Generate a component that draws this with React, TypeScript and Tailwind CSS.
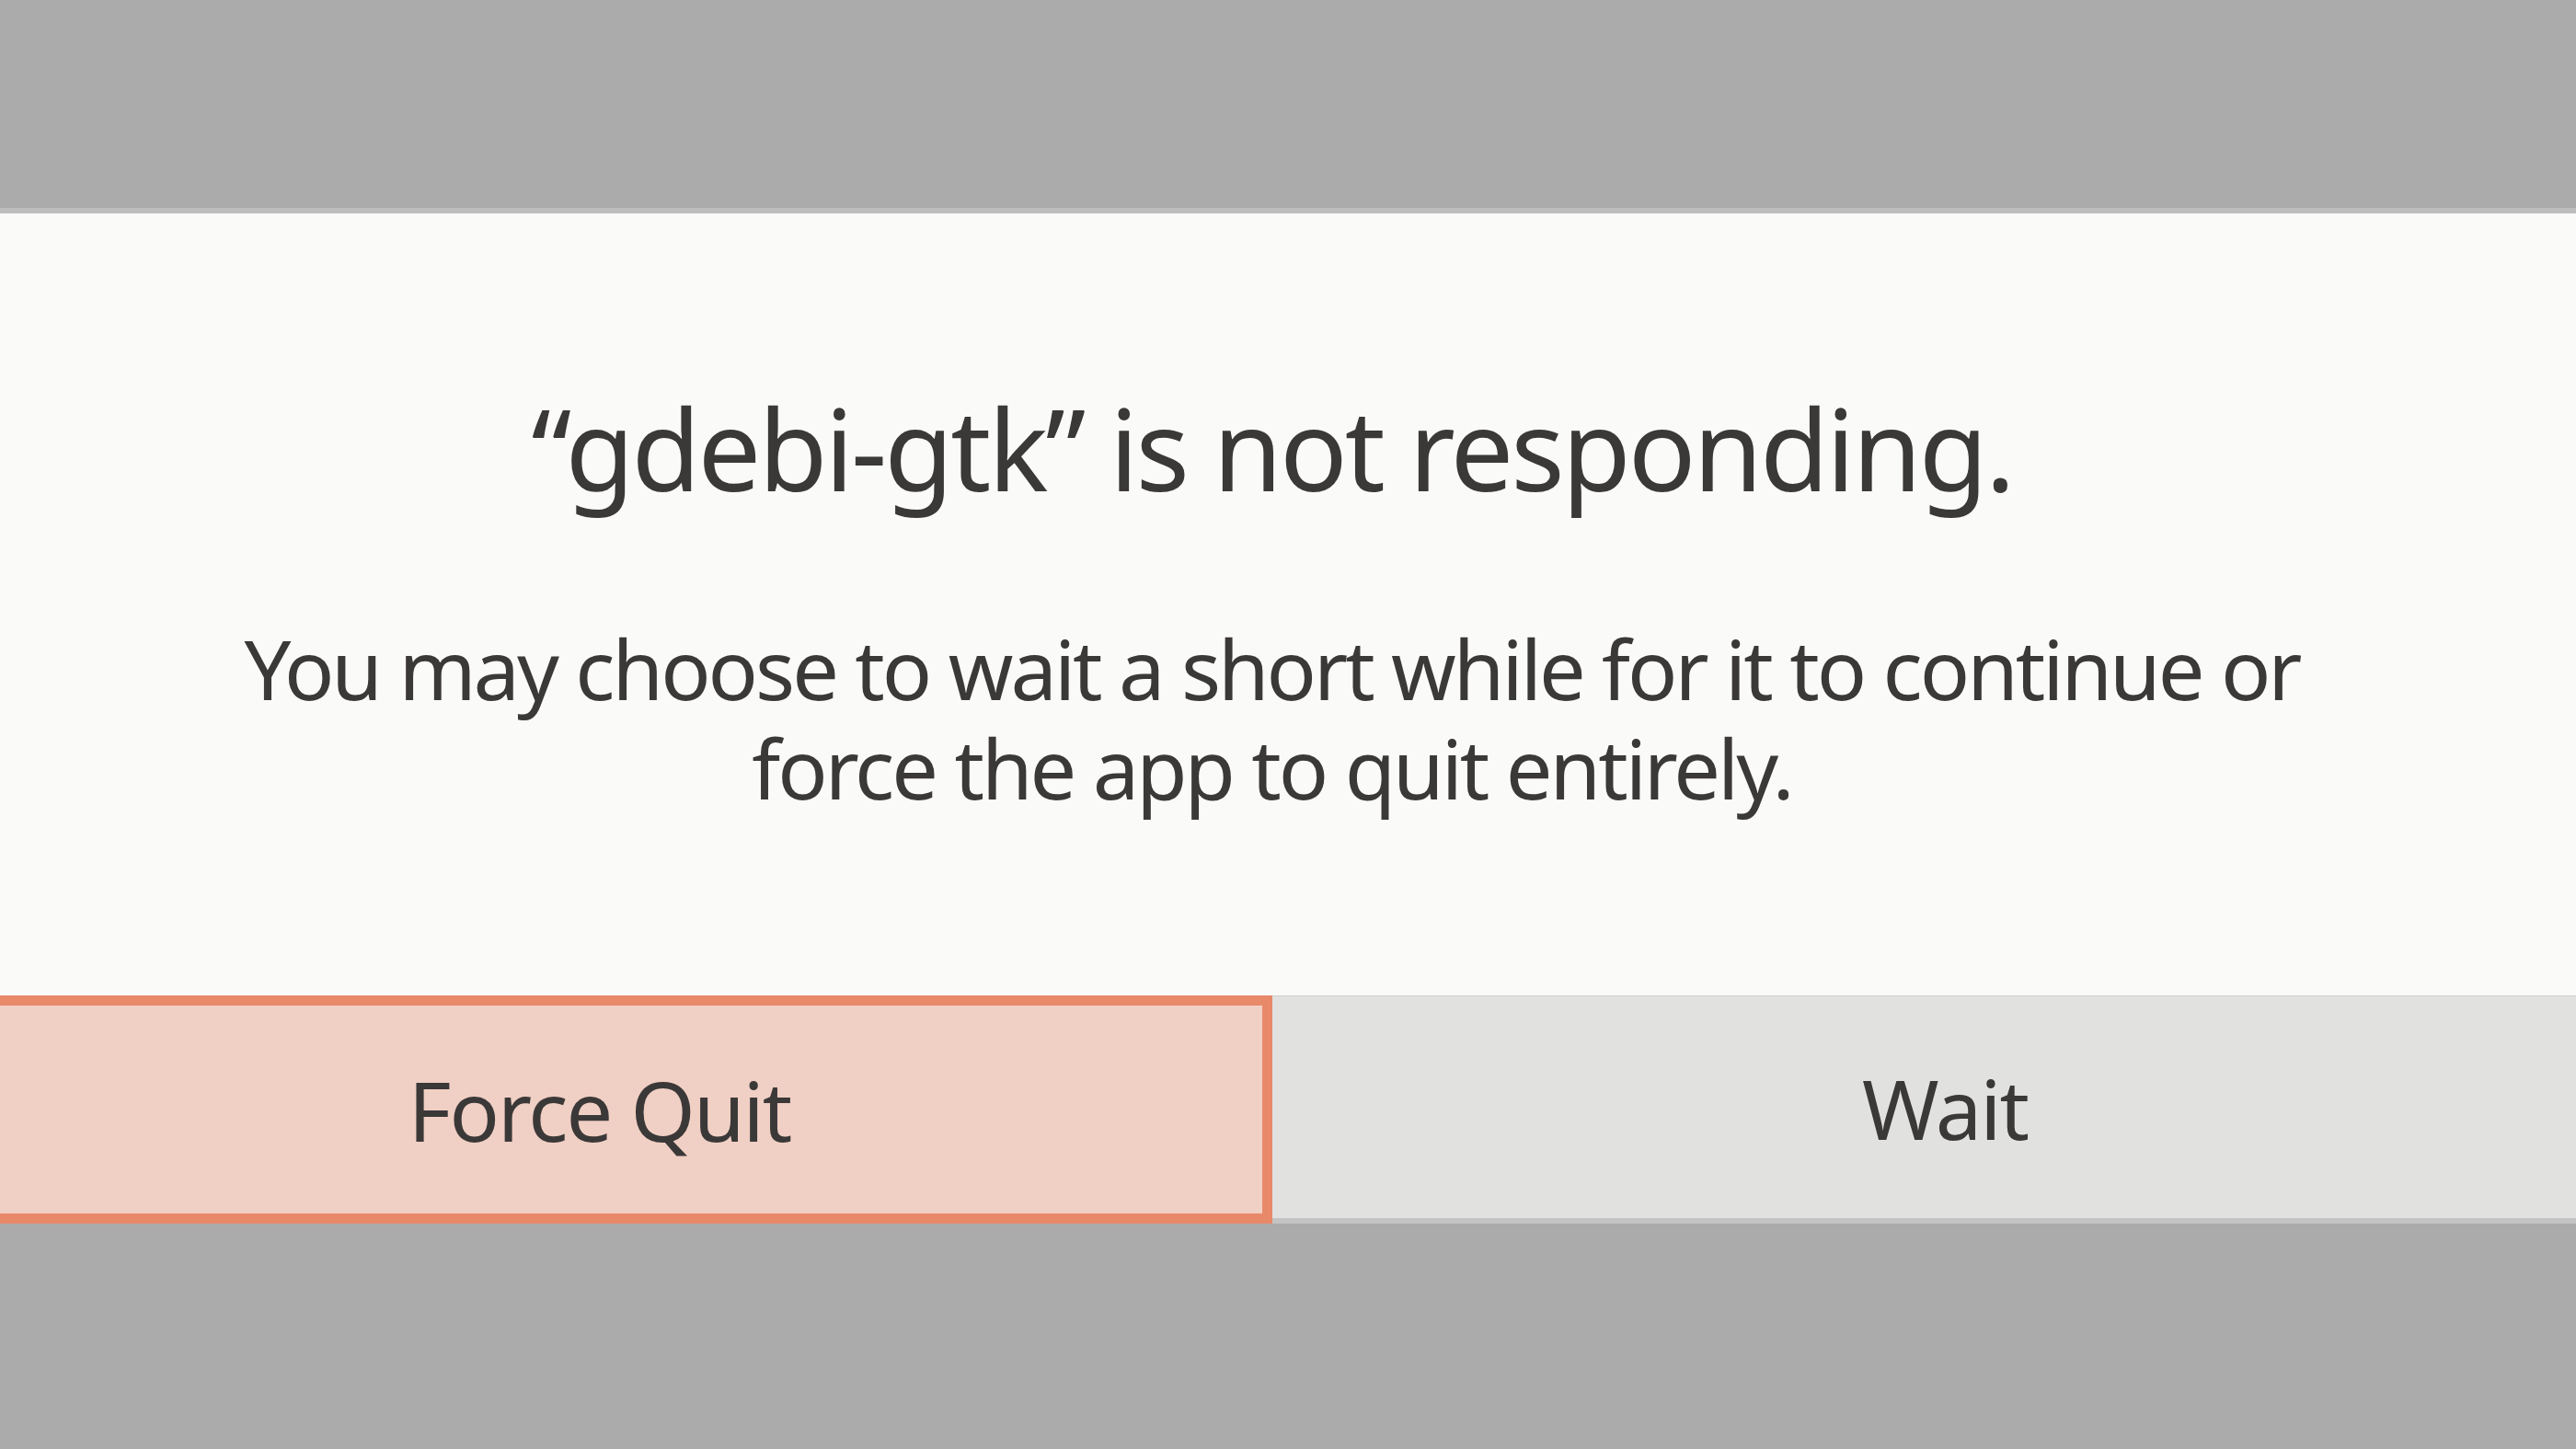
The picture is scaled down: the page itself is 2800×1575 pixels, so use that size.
export default function App() {
  return (
    <div
      className="flex h-[1575px] w-full flex-col overflow-hidden bg-[#ababab] text-[#3b3838]"
      style={{ fontFamily: '"Noto Sans", "Open Sans", sans-serif' }}
    >
      <div className="h-[226px] shrink-0" />

      <div className="ml-[-80px] flex w-[2925px] shrink-0 flex-col border-t-[6px] border-[#bdbdbd] bg-[#fafaf8]">
        <div className="flex h-[850px] flex-col items-center pt-[194px] text-center">
          <h1 className="text-[122px] leading-none font-normal tracking-[-3px]">“gdebi-gtk” is not responding.</h1>
          <p className="mt-[124px] text-[90px] leading-[108px] tracking-[-3px]">
            You may choose to wait a short while for it to continue or
            <br />
            force the app to quit entirely.
          </p>
        </div>

        <div className="flex h-[248px]">
          <button className="flex w-[1463px] shrink-0 items-center justify-center border-[11px] border-[#e8896a] bg-[#f0cfc4] text-[90px] leading-none tracking-[-2px]">
            Force Quit
          </button>
          <button className="flex flex-1 items-center justify-center border-t border-b-[6px] border-t-[#cfcfcf] border-b-[#c4c4c4] bg-[#e1e1e0] text-[90px] leading-none tracking-[-2px]">
            Wait
          </button>
        </div>
      </div>
    </div>
  );
}
